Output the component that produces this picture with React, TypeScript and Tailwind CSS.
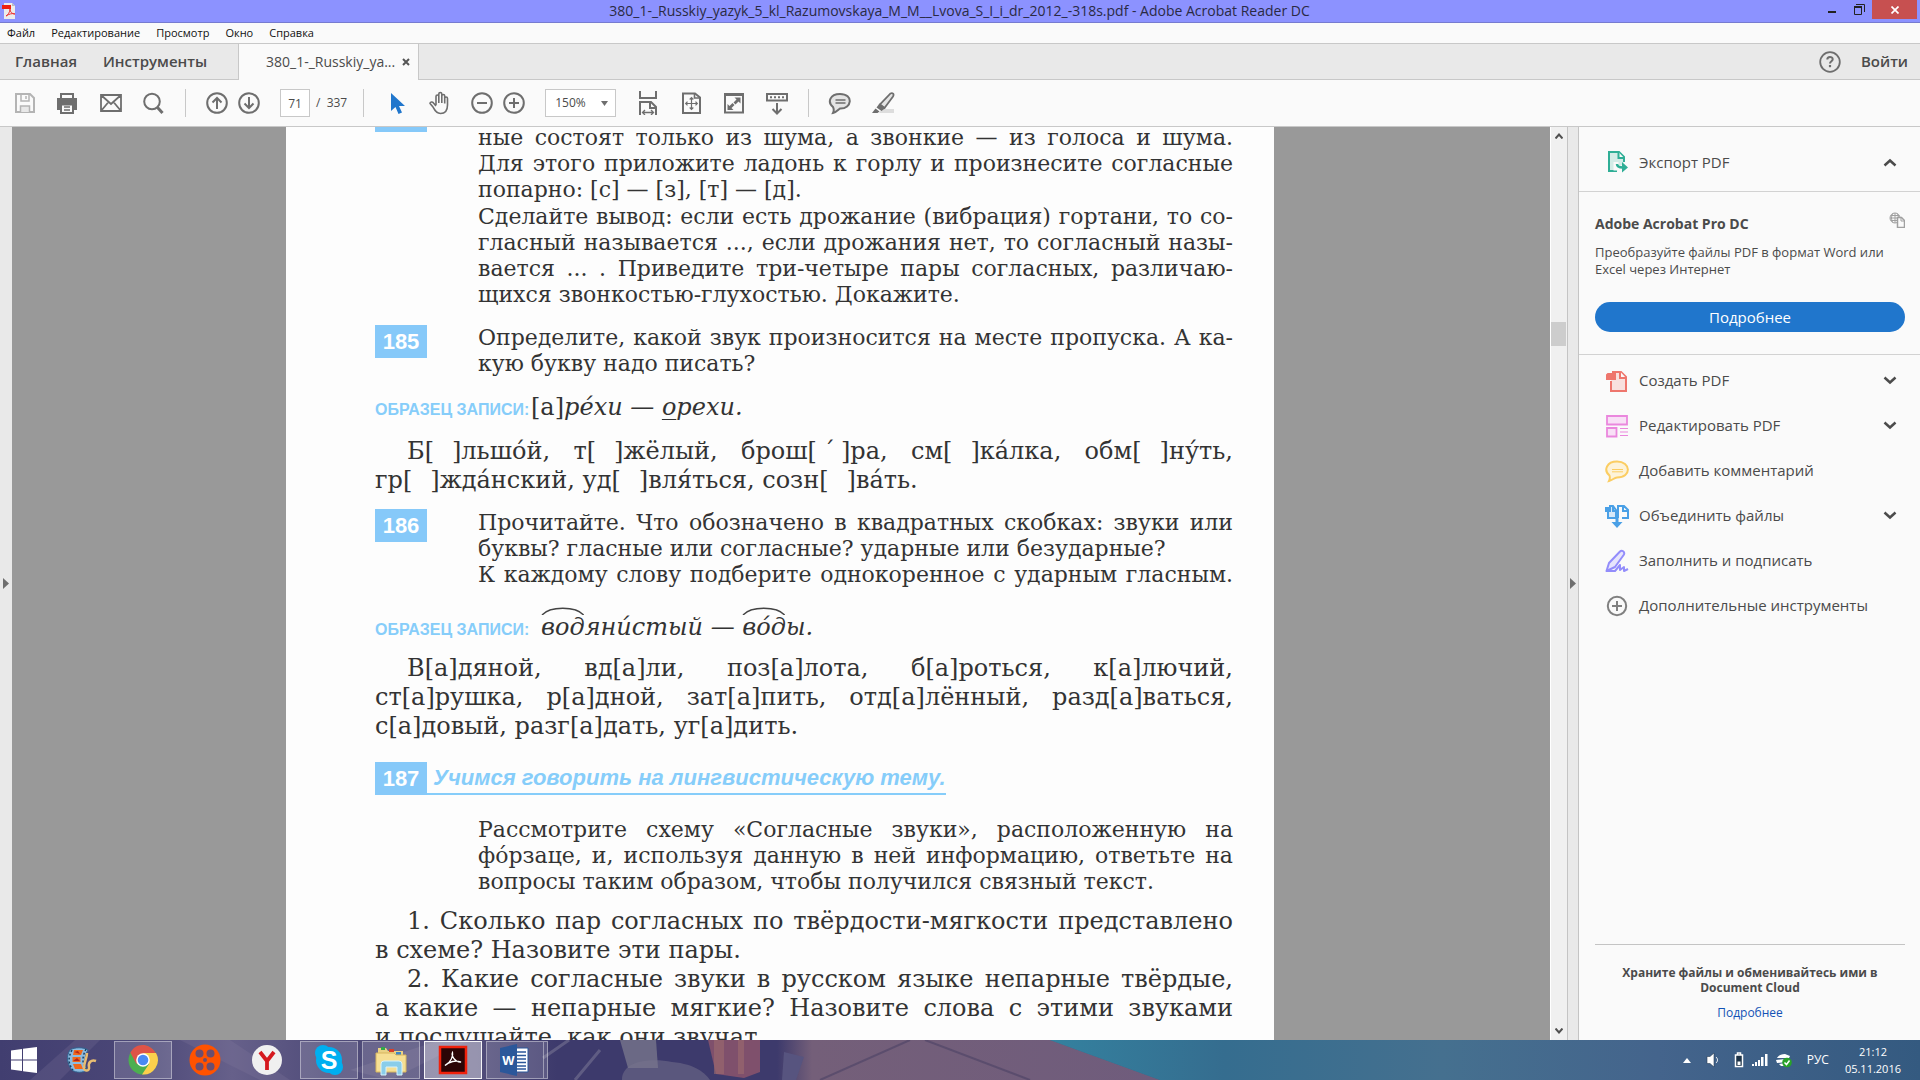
import React, { useState } from 'react';
import { clsx } from 'clsx';

const ACUTE = '\u0301';
const GAP = '\u2002\u2005';

interface TextLine {
  text: React.ReactNode;
  full?: boolean;
  indent?: boolean;
}

interface TextBlockProps {
  lines: TextLine[];
  className?: string;
}

function TextBlock({ lines, className }: TextBlockProps) {
  return (
    <p className={className}>
      {lines.map((line, index) => (
        <span
          key={index}
          className={clsx(
            'block whitespace-nowrap',
            line.full && 'text-justify [text-align-last:justify]',
            line.indent && 'pl-8'
          )}
        >
          {line.text}
        </span>
      ))}
    </p>
  );
}

function Badge({ children }: { children?: React.ReactNode }) {
  return (
    <div className="flex h-[33px] w-[52px] shrink-0 items-center justify-center bg-[#86c9f9] font-['Liberation_Sans',sans-serif] text-[22px] font-bold text-white">
      {children}
    </div>
  );
}

function SampleLabel() {
  return (
    <span className="w-[156px] shrink-0 font-['Liberation_Sans',sans-serif] text-base font-bold whitespace-nowrap text-[#86cdfa]">
      ОБРАЗЕЦ ЗАПИСИ:
    </span>
  );
}

function RootMark({ children }: { children: React.ReactNode }) {
  return (
    <span className="relative inline-block">
      <svg viewBox="0 0 40 8" preserveAspectRatio="none" className="absolute -top-1.5 left-0 h-2 w-full" aria-hidden="true">
        <path d="M1 8C8-1 32-1 39 8" fill="none" stroke="#444" strokeWidth="1.5" />
      </svg>
      {children}
    </span>
  );
}

function BookPage() {
  return (
    <article className="h-full w-[988px] overflow-hidden bg-[#fdfdfd] pr-[41px] pl-[89px] font-['DejaVu_Serif',serif] text-[22px] leading-[26px] text-[#333]">
      <div className="-mt-0.5 flex">
        <div className="h-[7px] w-[52px] shrink-0 bg-[#86c9f9]" />
        <div className="ml-[51px] min-w-0 flex-1">
          <TextBlock
            lines={[
              { text: 'ные состоят только из шума, а звонкие — из голоса и шума.', full: true },
              { text: 'Для этого приложите ладонь к горлу и произнесите согласные', full: true },
              { text: 'попарно: [с] — [з], [т] — [д].' },
            ]}
          />
          <TextBlock
            className="pt-px"
            lines={[
              { text: 'Сделайте вывод: если есть дрожание (вибрация) гортани, то со-', full: true },
              { text: 'гласный называется ..., если дрожания нет, то согласный назы-', full: true },
              { text: 'вается ... . Приведите три-четыре пары согласных, различаю-', full: true },
              { text: 'щихся звонкостью-глухостью. Докажите.' },
            ]}
          />
        </div>
      </div>

      <section className="mt-[17px] flex">
        <Badge>185</Badge>
        <TextBlock
          className="ml-[51px] min-w-0 flex-1"
          lines={[
            { text: 'Определите, какой звук произносится на месте пропуска. А ка-', full: true },
            { text: 'кую букву надо писать?' },
          ]}
        />
      </section>
      <div className="mt-4 flex items-baseline text-2xl leading-7">
        <SampleLabel />
        <p>
          [а]<i>ре{ACUTE}хи — <span className="underline decoration-1 underline-offset-4">о</span>рехи.</i>
        </p>
      </div>
      <TextBlock
        className="mt-[15px] text-2xl leading-[29px]"
        lines={[
          {
            text: `Б[${GAP}]льшо${ACUTE}й, т[${GAP}]жёлый, брош[\u2005´\u2005]ра, см[${GAP}]ка${ACUTE}лка, обм[${GAP}]ну${ACUTE}ть,`,
            full: true,
            indent: true,
          },
          { text: `гр[${GAP}]жда${ACUTE}нский, уд[${GAP}]вля${ACUTE}ться, созн[${GAP}]ва${ACUTE}ть.` },
        ]}
      />

      <section className="mt-3.5 flex">
        <Badge>186</Badge>
        <TextBlock
          className="ml-[51px] min-w-0 flex-1 pt-px"
          lines={[
            { text: 'Прочитайте. Что обозначено в квадратных скобках: звуки или', full: true },
            { text: 'буквы? гласные или согласные? ударные или безударные?' },
            { text: 'К каждому слову подберите однокоренное с ударным гласным.', full: true },
          ]}
        />
      </section>
      <div className="mt-[25px] flex items-baseline text-2xl leading-7">
        <SampleLabel />
        <p className="pl-2.5 italic">
          <RootMark>вод</RootMark>яни{ACUTE}стый — <RootMark>во{ACUTE}д</RootMark>ы.
        </p>
      </div>
      <TextBlock
        className="mt-3 text-2xl leading-[29px]"
        lines={[
          { text: 'В[а]дяной, вд[а]ли, поз[а]лота, б[а]роться, к[а]лючий,', full: true, indent: true },
          { text: 'ст[а]рушка, р[а]дной, зат[а]пить, отд[а]лённый, разд[а]ваться,', full: true },
          { text: 'с[а]довый, разг[а]дать, уг[а]дить.' },
        ]}
      />

      <section className="mt-[21px]">
        <div className="flex">
          <Badge>187</Badge>
          <h2 className="border-b-2 border-[#86cdfa] pl-1.5 font-['Liberation_Sans',sans-serif] text-[22px] leading-[31px] font-bold whitespace-nowrap text-[#86cdfa] italic">
            Учимся говорить на лингвистическую тему.
          </h2>
        </div>
        <TextBlock
          className="mt-[22px] ml-[103px]"
          lines={[
            { text: 'Рассмотрите схему «Согласные звуки», расположенную на', full: true },
            { text: `фо${ACUTE}рзаце, и, используя данную в ней информацию, ответьте на`, full: true },
            { text: 'вопросы таким образом, чтобы получился связный текст.' },
          ]}
        />
      </section>
      <TextBlock
        className="mt-3 text-2xl leading-[29px]"
        lines={[
          { text: '1. Сколько пар согласных по твёрдости-мягкости представлено', full: true, indent: true },
          { text: 'в схеме? Назовите эти пары.' },
          { text: '2. Какие согласные звуки в русском языке непарные твёрдые,', full: true, indent: true },
          { text: 'а какие — непарные мягкие? Назовите слова с этими звуками', full: true },
          { text: 'и послушайте, как они звучат.' },
        ]}
      />
    </article>
  );
}

function TitleBar() {
  return (
    <header className="flex h-[23px] shrink-0 items-start border-b border-[#767bd0] bg-[#8c92ff]">
      <div className="flex flex-1 pt-[3px] pl-0.5">
        <svg width="16" height="16" viewBox="0 0 16 16" aria-hidden="true">
          <path d="M2 0h8l3 3v13H2z" fill="#ececec" />
          <path d="M10 0l3 3h-3z" fill="#bbb" />
          <path d="M0 2h9v4H0z" fill="#ee2010" />
          <path d="M4 13c2-1 4-4 4-7 0 3 2 5 5 5-3-1-6 0-9 2z" fill="none" stroke="#e33" strokeWidth="1" />
        </svg>
      </div>
      <h1 className="text-sm leading-[22px] text-[#2a2a44]">
        380_1-_Russkiy_yazyk_5_kl_Razumovskaya_M_M__Lvova_S_I_i_dr_2012_-318s.pdf - Adobe Acrobat Reader DC
      </h1>
      <div className="flex flex-1 justify-end pr-[3px]">
        <button aria-label="Свернуть" className="flex h-[19px] w-7 items-end justify-center pb-1.5">
          <span className="h-0.5 w-2 bg-[#222]" />
        </button>
        <button aria-label="Восстановить" className="flex h-[19px] w-[26px] items-center justify-center">
          <svg width="11" height="11" viewBox="0 0 11 11" aria-hidden="true">
            <path d="M.5 3v7.500h7V3z M2 .5h8.500V8" fill="none" stroke="#222" />
            <path d="M0 3h8" stroke="#222" strokeWidth="2" />
          </svg>
        </button>
        <button aria-label="Закрыть" className="flex h-[19px] w-[45px] items-center justify-center bg-[#c75050]">
          <svg width="8" height="8" viewBox="0 0 8 8" aria-hidden="true">
            <path d="M.5.5l7 7m0-7l-7 7" stroke="#fff" strokeWidth="1.700" />
          </svg>
        </button>
      </div>
    </header>
  );
}

const menuItems = ['Файл', 'Редактирование', 'Просмотр', 'Окно', 'Справка'];

function MenuBar() {
  return (
    <nav className="flex h-5 shrink-0 items-center gap-4 pl-[7px] text-[11px] leading-4 text-[#111]">
      {menuItems.map((item) => (
        <button key={item}>{item}</button>
      ))}
    </nav>
  );
}

function TabBar() {
  return (
    <div className="flex h-[37px] shrink-0 border-t border-[#c8c8c8] bg-[#e9e9e9] text-[#4b4b4b]">
      <div className="flex w-[239px] items-center gap-[26px] border-r border-b border-[#c8c8c8] pl-[15px] text-[15px] font-semibold">
        <button>Главная</button>
        <button>Инструменты</button>
      </div>
      <div className="flex w-[179px] items-center justify-between bg-[#fafafa] pr-2 pl-[27px] text-sm">
        <span>380_1-_Russkiy_ya...</span>
        <button aria-label="Закрыть вкладку">
          <svg width="8" height="8" viewBox="0 0 8 8" aria-hidden="true">
            <path d="M1 1l6 6m0-6l-6 6" stroke="#555" strokeWidth="2" />
          </svg>
        </button>
      </div>
      <div className="flex flex-1 items-center justify-end gap-5 border-b border-l border-[#c8c8c8] pr-3">
        <button aria-label="Справка">
          <svg width="22" height="22" viewBox="0 0 22 22" fill="none" stroke="#6e6e6e" aria-hidden="true">
            <circle cx="11" cy="11" r="9.800" strokeWidth="1.800" />
            <path d="M8.300 8.500c0-3.500 5.400-3.300 5.400-.3 0 2-2.700 2-2.700 4.300" strokeWidth="2" />
            <path d="M11 14v2.200" strokeWidth="2.200" />
          </svg>
        </button>
        <button className="text-[15px] font-semibold">Войти</button>
      </div>
    </div>
  );
}

interface ToolButtonProps {
  label: string;
  className?: string;
  children: React.ReactNode;
}

function ToolButton({ label, className, children }: ToolButtonProps) {
  return (
    <button aria-label={label} className={clsx('shrink-0', className)}>
      <svg width="24" height="24" viewBox="0 0 24 24" fill="none" stroke="#6e6e6e" strokeWidth="2" aria-hidden="true">
        {children}
      </svg>
    </button>
  );
}

function Separator() {
  return <div className="h-7 w-px shrink-0 bg-[#c8c8c8]" />;
}

function Toolbar() {
  const [page, setPage] = useState('71');
  const [zoom, setZoom] = useState('150');

  return (
    <div className="flex h-[47px] shrink-0 items-center border-b border-[#c8c8c8] pl-[13px] text-[#4b4b4b]">
      <ToolButton label="Сохранить">
        <g stroke="#b4b4b4">
          <path d="M3 3h14l4 4v14H3z" />
          <path d="M8 3v7h8V3M13 5v3" strokeWidth="1.500" />
          <path d="M7.500 21v-6h9v6" strokeWidth="1.500" fill="#e8e8e8" />
        </g>
      </ToolButton>
      <ToolButton label="Печать" className="ml-[18px]">
        <path d="M6 8V3h12v5" />
        <path d="M3 8h18v10h-3v-4H6v4H3z" fill="#6e6e6e" />
        <path d="M6 13.500h12V22H6z" fill="#fafafa" />
        <path d="M9 16h6M9 19h6" strokeWidth="1.300" />
      </ToolButton>
      <ToolButton label="Отправить" className="ml-5">
        <path d="M2 4h20v16H2zM2 4l10 9L22 4M2 20l7.500-9M22 20l-7.500-9" strokeWidth="1.800" />
      </ToolButton>
      <ToolButton label="Найти" className="ml-[18px]">
        <circle cx="11" cy="10.500" r="7.800" />
        <path d="M16.500 16.500l5 5.500" strokeWidth="3" />
      </ToolButton>
      <div className="w-5 shrink-0" />
      <Separator />
      <ToolButton label="Предыдущая страница" className="ml-[19px]">
        <circle cx="12" cy="12" r="9.800" />
        <path d="M12 18V7M7.500 11.500L12 7l4.500 4.500" />
      </ToolButton>
      <ToolButton label="Следующая страница" className="ml-2">
        <circle cx="12" cy="12" r="9.800" />
        <path d="M12 6v11M7.500 12.500L12 17l4.500-4.500" />
      </ToolButton>
      <input
        aria-label="Страница"
        value={page}
        onChange={(e) => setPage(e.target.value)}
        className="ml-[19px] h-7 w-[30px] shrink-0 border border-[#c8c8c8] bg-white text-center text-xs"
      />
      <span className="ml-1.5 text-xs whitespace-pre">/  337</span>
      <div className="w-4 shrink-0" />
      <Separator />
      <ToolButton label="Выделение" className="ml-5">
        <path d="M7 2v18l4.500-4 3 7 3.500-1.500-3-6.500h6z" fill="#2076cc" stroke="none" />
      </ToolButton>
      <ToolButton label="Рука" className="ml-5">
        <path
          d="M8 14V5.500c0-2 2.800-2 2.800 0V3c0-2 3-2 3 0v2c0-2 2.900-2 2.900 0v2.500c0-2 2.800-2 2.800 0V14c0 5-2 8.500-7 8.500-4.500 0-6-3.500-7.500-6.500L2 12.500c0-2 2.500-2 3.500-.5L8 15M10.800 5.500V12M13.800 5v7M16.700 7v5.500"
          strokeWidth="1.600"
        />
      </ToolButton>
      <ToolButton label="Уменьшить" className="ml-[18px]">
        <circle cx="12" cy="12" r="9.800" />
        <path d="M7 12h10" />
      </ToolButton>
      <ToolButton label="Увеличить" className="ml-2">
        <circle cx="12" cy="12" r="9.800" />
        <path d="M7 12h10M12 7v10" />
      </ToolButton>
      <div className="relative ml-[19px] shrink-0">
        <select
          aria-label="Масштаб"
          value={zoom}
          onChange={(e) => setZoom(e.target.value)}
          className="h-7 w-[71px] appearance-none border border-[#c8c8c8] bg-white pl-[9px] text-xs"
        >
          <option value="100">100%</option>
          <option value="150">150%</option>
          <option value="200">200%</option>
        </select>
        <svg width="7" height="5" viewBox="0 0 7 5" className="pointer-events-none absolute top-3 right-2" aria-hidden="true">
          <path d="M0 0h7L3.500 5z" fill="#6e6e6e" />
        </svg>
      </div>
      <ToolButton label="По ширине" className="ml-5">
        <path d="M4 0v7h16V0M4 24V11h11l5 5v8M14 11v6h6" />
        <path d="M7 21.500h10M9 19l-2.500 2.500L9 24M15 19l2.500 2.500L15 24" strokeWidth="1.300" />
      </ToolButton>
      <ToolButton label="Вся страница" className="ml-[19px]">
        <path d="M4 2.500h12l5 4V22H4z" />
        <path d="M15.500 2v5H21" strokeWidth="1.600" />
        <path d="M12.500 7v11M7 12.500h11M10.700 8.500l1.800-1.800 1.800 1.800M10.700 16.500l1.800 1.800 1.800-1.800M8.500 10.700l-1.800 1.800 1.800 1.800M16.500 10.700l1.800 1.800-1.800 1.800" strokeWidth="1.200" />
      </ToolButton>
      <ToolButton label="Полный экран" className="ml-[19px]">
        <path d="M3 3h18v18.500H3z" />
        <path d="M3 3.500h18" strokeWidth="3" />
        <path d="M18.500 6.500v6l-2-2-3 3-2-2 3-3-2-2zM5.500 19v-6l2 2 3-3 2 2-3 3 2 2z" fill="#6e6e6e" stroke="none" />
      </ToolButton>
      <ToolButton label="Прокрутка" className="ml-[19px]">
        <path d="M2 3h20v6.500H2z" />
        <path d="M5 6.200h14" strokeDasharray="2 2" />
        <path d="M12 12v10M7.500 18l4.500 4.500 4.500-4.500" />
      </ToolButton>
      <div className="w-[19px] shrink-0" />
      <Separator />
      <ToolButton label="Комментарий" className="ml-[19px]">
        <path d="M12 3c14 0 12 15 0 14.500-2 1.500-4 4-7 4.500 1-2 1-4 0-6C-1 11 2 3 12 3z" fill="#e4e4e4" />
        <path d="M7.500 9h10M7.500 12h10" strokeWidth="1.300" />
      </ToolButton>
      <ToolButton label="Выделить текст" className="ml-[19px]">
        <path d="M8 22l3-4h12v4z" fill="#ddd" stroke="none" />
        <path d="M19.500 2.500c2-1 4 .5 2.500 3L13.500 17 9 13.500z" fill="#e4e4e4" strokeWidth="1.800" />
        <path d="M8.500 12.500l6 4.500-4 3-5-3.500zM4.500 17.500l4 3-2 1.500H1z" fill="#6e6e6e" stroke="none" />
      </ToolButton>
    </div>
  );
}

function Chevron({ up }: { up?: boolean }) {
  return (
    <svg width="14" height="9" viewBox="0 0 14 9" aria-hidden="true">
      <path d={up ? 'M1.500 7.500L7 2.500l5.500 5' : 'M1.500 1.500l5.500 5 5.500-5'} fill="none" stroke="#4b4b4b" strokeWidth="2.500" />
    </svg>
  );
}

interface Tool {
  label: string;
  icon: React.ReactNode;
  expandable?: boolean;
}

const tools: Tool[] = [
  {
    label: 'Создать PDF',
    expandable: true,
    icon: (
      <g fill="none" stroke="#ee766d" strokeWidth="2">
        <path d="M6 12v10h15V8l-5-5H7" fill="#f8e0de" />
        <path d="M15 2.500V9h6" fill="#fafafa" />
        <path d="M3 5h7v5H2V6z" fill="#ee766d" />
      </g>
    ),
  },
  {
    label: 'Редактировать PDF',
    expandable: true,
    icon: (
      <g fill="#f8e0f6" stroke="#ea87dd" strokeWidth="1.800">
        <path d="M2 2h20v8.500H2zM2 14h9.500v8.500H2z" />
        <path d="M15 14.500h8M15 18h8M15 21.500h8" strokeWidth="1" />
      </g>
    ),
  },
  {
    label: 'Добавить комментарий',
    icon: (
      <g stroke="#fbcd62" strokeWidth="2">
        <path d="M12 2.500c14 0 15 16 0 16-3 .2-4 2.500-8 3.500 1-2 1-4 .5-5.500C-2 11 2 2.500 12 2.500z" fill="#fdf3d9" />
        <path d="M7 10.500h11M7 12.800h11" strokeWidth="1" />
      </g>
    ),
  },
  {
    label: 'Объединить файлы',
    expandable: true,
    icon: (
      <g fill="none" stroke="#4aa0e6" strokeWidth="2">
        <path d="M3 8v6h8V6L8 2H4" fill="#d6e8f8" />
        <path d="M13 14V2h6l4 4v8h-6M18 2v5h5M8 2v5h4" />
        <path d="M0 3h6v5H0z" fill="#4aa0e6" stroke="none" />
        <path d="M10.500 14h3v4h4L12 24l-5.500-6h4z" fill="#4aa0e6" stroke="none" />
      </g>
    ),
  },
  {
    label: 'Заполнить и подписать',
    icon: (
      <g fill="none" stroke="#938dfb" strokeWidth="2" strokeLinejoin="round">
        <path d="M1.500 22l2.500-8L15 2.500c2-2 5 .5 4 3L10 18z" fill="#e7e5fc" />
        <path d="M1.500 22H10l5-6v5l4-3v4l4-2" />
      </g>
    ),
  },
  {
    label: 'Дополнительные инструменты',
    icon: (
      <g fill="none" stroke="#808080" strokeWidth="2">
        <circle cx="12" cy="12" r="9.200" />
        <path d="M7 12h10M12 7v10" />
      </g>
    ),
  },
];

function SidePanel() {
  return (
    <aside className="flex w-[341px] shrink-0 flex-col bg-[#fafafa] text-[#4b4b4b]">
      <button className="flex h-[65px] shrink-0 items-center border-b border-[#d2d2d2] pt-1.5 pr-[23px] pl-[26px] text-[15px]">
        <svg width="24" height="24" viewBox="0 0 24 24" fill="none" stroke="#2fae96" strokeWidth="2" aria-hidden="true">
          <path d="M12 21H4V2h10l5 5v5" fill="#d3ece7" />
          <path d="M13.500 2v6H19" fill="#fafafa" />
          <path d="M11 12v6h7" stroke="#fafafa" strokeWidth="5" />
          <path d="M12 14c0 2.500 2 3.500 6 3.500" strokeWidth="2.500" />
          <path d="M17 12l6 5.500-6 5z" fill="#2fae96" stroke="none" />
        </svg>
        <span className="ml-2.5 flex-1 text-left">Экспорт PDF</span>
        <Chevron up />
      </button>
      <section className="border-b border-[#d2d2d2] pt-[18px] pr-[15px] pb-[22px] pl-4">
        <div className="flex justify-between">
          <h2 className="pt-0.5 text-sm leading-6 font-bold">Adobe Acrobat Pro DC</h2>
          <svg width="16" height="16" viewBox="0 0 16 16" className="mt-0.5" fill="none" stroke="#a0a0a0" aria-hidden="true">
            <circle cx="6" cy="6" r="5" />
            <path d="M1 6h10M2 3.500h8M2 8.500h7M6 1v10M4 1.500c-2 3-2 6 0 9M8 1.500c2 3 2 6 0 9" />
            <path d="M8.500 5.500h4l3 3v7h-7z" fill="#fafafa" strokeWidth="1.500" />
            <path d="M12 6v3h3" />
          </svg>
        </div>
        <p className="mt-2 text-[13px] leading-[17px]">
          Преобразуйте файлы PDF в формат Word или
          <br />
          Excel через Интернет
        </p>
        <button className="mt-6 h-[30px] w-full rounded-full bg-[#2076cc] text-[15px] text-white">Подробнее</button>
      </section>
      <ul className="pt-[3px] text-[15px]">
        {tools.map((tool) => (
          <li key={tool.label}>
            <button className="flex h-[45px] w-full items-center pr-[23px] pl-[26px]">
              <svg width="24" height="24" viewBox="0 0 24 24" aria-hidden="true">
                {tool.icon}
              </svg>
              <span className="ml-2.5 flex-1 text-left whitespace-nowrap">{tool.label}</span>
              {tool.expandable && <Chevron />}
            </button>
          </li>
        ))}
      </ul>
      <footer className="mt-auto mr-[15px] ml-4 border-t border-[#c4c4c4] pt-5 pb-5 text-center text-xs leading-[15px]">
        <p className="font-bold">
          Храните файлы и обменивайтесь ими в
          <br />
          Document Cloud
        </p>
        <a href="#cloud" className="mt-2.5 inline-block text-[#1352b5]">
          Подробнее
        </a>
      </footer>
    </aside>
  );
}

function Scrollbar() {
  return (
    <div className="flex w-[17px] shrink-0 flex-col items-center justify-between border-l border-white bg-[#f0f0f0] py-1.5">
      <svg width="8" height="6" viewBox="0 0 8 6" aria-hidden="true">
        <path d="M.5 5.500L4 1.500l3.500 4" fill="none" stroke="#505050" strokeWidth="2" />
      </svg>
      <div className="flex w-full flex-1 flex-col">
        <div className="grow-[183]" />
        <div className="h-6 w-[15px] bg-[#cdcdcd]" />
        <div className="grow-[681]" />
      </div>
      <svg width="8" height="6" viewBox="0 0 8 6" aria-hidden="true">
        <path d="M.5.5L4 4.500l3.500-4" fill="none" stroke="#505050" strokeWidth="2" />
      </svg>
    </div>
  );
}

function Splitter({ className }: { className?: string }) {
  return (
    <div className={clsx('flex w-3 shrink-0 items-center justify-center bg-[#e9e9e9]', className)}>
      <svg width="6" height="11" viewBox="0 0 6 11" aria-hidden="true">
        <path d="M0 0l6 5.500L0 11z" fill="#6e6e6e" />
      </svg>
    </div>
  );
}

interface TaskProps {
  label: string;
  open?: boolean;
  active?: boolean;
  children: React.ReactNode;
}

function Task({ label, open, active, children }: TaskProps) {
  return (
    <button
      aria-label={label}
      className={clsx(
        'flex h-[38px] w-[58px] shrink-0 items-center justify-center border',
        !open && !active && 'border-transparent',
        open && 'border-white/40 bg-white/15',
        active && 'border-white/90 bg-white/40'
      )}
    >
      <svg width="32" height="32" viewBox="0 0 32 32" aria-hidden="true">
        {children}
      </svg>
    </button>
  );
}

function Taskbar() {
  return (
    <footer className="relative flex h-10 shrink-0 items-center bg-[#3c6486] text-xs text-white">
      <svg viewBox="0 0 1920 40" preserveAspectRatio="none" className="absolute inset-0 h-full w-full" aria-hidden="true">
        <defs>
          <linearGradient id="wall">
            <stop offset="0" stopColor="#413e70" />
            <stop offset=".12" stopColor="#4b4777" />
            <stop offset=".2" stopColor="#66608a" />
            <stop offset=".29" stopColor="#4e4a78" />
            <stop offset=".4" stopColor="#55507c" />
            <stop offset=".48" stopColor="#3d3a6c" />
            <stop offset=".67" stopColor="#3d3a6c" />
            <stop offset=".7" stopColor="#745f79" />
            <stop offset="1" stopColor="#6f5c7c" />
          </linearGradient>
          <linearGradient id="sea">
            <stop offset="0" stopColor="#34819f" />
            <stop offset=".2" stopColor="#356d8f" />
            <stop offset=".45" stopColor="#45708f" />
            <stop offset=".7" stopColor="#44648c" />
            <stop offset="1" stopColor="#345a80" />
          </linearGradient>
        </defs>
        <path d="M0 0h1050l110 40H0z" fill="url(#wall)" />
        <path d="M1050 0h870v40h-760z" fill="url(#sea)" />
        <path d="M30 40L75 0h25L60 40zM180 0h50l60 40h-30zM350 30l90-30h30l-80 40z" fill="#8a80a4" opacity=".2" />
        <path d="M543 18l26-18M575 40l25-30" stroke="#777493" strokeWidth="3" opacity=".6" />
        <path d="M620 0h36l2 28h-30z" fill="#77758c" opacity=".8" />
        <path d="M708 0h52v32l-16 6-28-4z" fill="#7f506c" />
        <path d="M714 0h10v34h-10zM738 0h6v34h-6z" fill="#9c6a6e" opacity=".6" />
        <path d="M622 40c0-20 30-22 50-18 24 2 34 12 38 18z" fill="#77748e" opacity=".5" />
        <path d="M784 12l20 5-8 23h-14z" fill="#57547f" />
        <path d="M820 40l90-40M925 0l105 40" stroke="#514668" strokeWidth="2" fill="none" opacity=".7" />
      </svg>

      <div className="relative flex items-center gap-1">
        <button aria-label="Пуск" className="flex h-10 w-12 items-center justify-center">
          <svg width="26" height="26" viewBox="0 0 26 26" fill="#fff" aria-hidden="true">
            <path d="M0 3.500l11-1.500v10.500H0zM12 1.800L26 0v12.500H12zM0 13.500h11V24L0 22.500zM12 13.500h14V26l-14-1.800z" />
          </svg>
        </button>
        <Task label="Видеоредактор">
          <path d="M5 6c4-3 14-3 18 0-4 6-4 14-1 20-4 3-11 3-15 0C2 20 1 12 5 6z" fill="#8cbce1" stroke="#2f6290" />
          <path d="M7 6c-4 7-4 14 1 20M21 5c-4 8-4 14 0 21" stroke="#193f62" strokeWidth="1.500" strokeDasharray="2 2" fill="none" />
          <path d="M9 6h9l-2 5H8zM7.500 13h8v5h-8zM8 20h8l2 5H10z" fill="#ef681b" />
          <path d="M9 8l4-1 2 3zM8 17l4-3 3 3z" fill="#b5241a" />
          <path d="M31 17c-5-2-8 2-7 6s-5 5-5 1c0-6 3-10 3-15" fill="none" stroke="#e9bd72" strokeWidth="2.500" />
        </Task>
        <Task label="Google Chrome" open>
          <circle cx="16" cy="16" r="14.500" fill="#4caf50" />
          <path d="M3.400 8.800L9.500 20 16 12h14.500A14.500 14.500 0 0 0 28.600 8.800C22-2 8-1 3.400 8.800z" fill="#de5347" />
          <path d="M16 9h13a14.500 14.500 0 0 1-14 21.500L22 20z" fill="#fcd04c" />
          <circle cx="16" cy="16" r="6.800" fill="#fff" />
          <circle cx="16" cy="16" r="5.300" fill="#4a8af4" />
        </Task>
        <Task label="Кино">
          <circle cx="16" cy="16" r="15.500" fill="#ff5200" />
          <g fill="#6a4e70">
            <circle cx="10.500" cy="9.500" r="4" />
            <circle cx="21.500" cy="9.500" r="4" />
            <circle cx="10.500" cy="22.500" r="4" />
            <circle cx="21.500" cy="22.500" r="4" />
            <circle cx="16" cy="16" r="2" />
          </g>
        </Task>
        <Task label="Яндекс">
          <circle cx="16" cy="16" r="15" fill="#f0f0f0" />
          <path d="M9 8l7 9v9M23 8l-7 9" fill="none" stroke="#d5191f" strokeWidth="3.800" />
        </Task>
        <Task label="Skype" open>
          <circle cx="16" cy="16" r="13" fill="#00aff0" />
          <circle cx="10" cy="9" r="8" fill="#00aff0" />
          <circle cx="22" cy="23" r="8" fill="#00aff0" />
          <text x="16" y="25" textAnchor="middle" fontFamily="Liberation Sans, sans-serif" fontWeight="bold" fontSize="25" fill="#fff">S</text>
        </Task>
        <Task label="Проводник" open>
          <path d="M3 4h8l2 3h15v8H3z" fill="#ead284" />
          <path d="M6 3h4v3H6z" fill="#31a84a" />
          <path d="M14 5h5v3h-5z" fill="#d94028" />
          <path d="M21 8h5v3h-5z" fill="#3d85c6" />
          <path d="M1 9h18l2 2h10v17H1z" fill="#f6df94" stroke="#d7b65f" />
          <path d="M6 31V20q0-3 3-3h15q3 0 3 3v11h-5v-8H11v8z" fill="#8acdea" stroke="#d8f2fc" />
        </Task>
        <Task label="Adobe Acrobat Reader" active>
          <path d="M3 3h26v26H3z" fill="#2b0506" stroke="#f0210c" strokeWidth="2.500" />
          <path d="M8 21.500c6-3 8.500-10 7.500-13-1.500 3 2.500 10 8.500 9.500-5-2-12-.5-16 3.500z" fill="none" stroke="#fff" strokeWidth="1.300" />
        </Task>
        <div className="flex">
          <Task label="Microsoft Word" open>
            <path d="M17 4h12v24H17z" fill="#fff" stroke="#2b579a" />
            <path d="M17 8h10M17 11.500h10M17 15h10M17 18.500h10M17 22h10M17 25h10" stroke="#2b579a" strokeWidth="1.300" />
            <path d="M1 4l17-4v32L1 28z" fill="#2b579a" />
            <text x="9.500" y="20.500" textAnchor="middle" fontFamily="Liberation Sans, sans-serif" fontWeight="bold" fontSize="13" fill="#fff">W</text>
          </Task>
          <div className="w-1 border-y border-r border-white/40 bg-white/15" />
        </div>
      </div>

      <div className="relative ml-auto flex items-center pr-[19px]">
        <svg width="8" height="5" viewBox="0 0 8 5" aria-hidden="true">
          <path d="M4 0l4 5H0z" fill="#fff" />
        </svg>
        <svg width="14" height="16" viewBox="0 0 14 16" className="ml-[15px]" aria-hidden="true">
          <path d="M1 4.500h3L8 1v14l-4-3.500H1z" fill="#fff" stroke="#283e54" strokeWidth=".6" />
          <path d="M10 5c2 2 2 4 0 6" fill="none" stroke="#fff" />
        </svg>
        <svg width="10" height="16" viewBox="0 0 10 16" className="ml-3.5" aria-hidden="true">
          <path d="M1.500 3h7v11.500h-7zM3.500 1h3v2h-3z" fill="#1d3348" stroke="#fff" strokeWidth="1.500" />
          <path d="M3.500 9.500h3v3.500h-3z" fill="#fff" />
        </svg>
        <svg width="16" height="14" viewBox="0 0 16 14" fill="#fff" className="ml-2" aria-hidden="true">
          <path d="M0 11h2v2H0zM3 9h2v4H3zM6 7h2v6H6zM9 4h2.500v9H9zM13 1h2.500v12H13z" />
        </svg>
        <svg width="16" height="16" viewBox="0 0 16 16" className="ml-2" aria-hidden="true">
          <path d="M1 6c1-2 4-4 8-4l5 2-1 2zM0 8l10-1v3L1 11zM3 12l6-1v3H5z" fill="#fff" />
          <circle cx="11" cy="10.500" r="4.800" fill="#29a329" />
          <path d="M8.500 10.500l2 2 3-4" fill="none" stroke="#fff" strokeWidth="1.500" />
        </svg>
        <span className="ml-[15px]">РУС</span>
        <div className="ml-4 text-center text-[11px] leading-[17px]">
          <div>21:12</div>
          <div>05.11.2016</div>
        </div>
      </div>
    </footer>
  );
}

export default function App() {
  return (
    <div className="flex h-screen flex-col overflow-hidden bg-[#fafafa] font-['Open_Sans','Noto_Sans',sans-serif]">
      <TitleBar />
      <MenuBar />
      <TabBar />
      <Toolbar />
      <div className="flex min-h-0 flex-1">
        <Splitter />
        <main className="flex min-w-0 flex-1 justify-center overflow-hidden bg-[#999] pr-0.5">
          <BookPage />
        </main>
        <Scrollbar />
        <Splitter className="border-x border-[#c4c4c4]" />
        <SidePanel />
      </div>
      <Taskbar />
    </div>
  );
}
